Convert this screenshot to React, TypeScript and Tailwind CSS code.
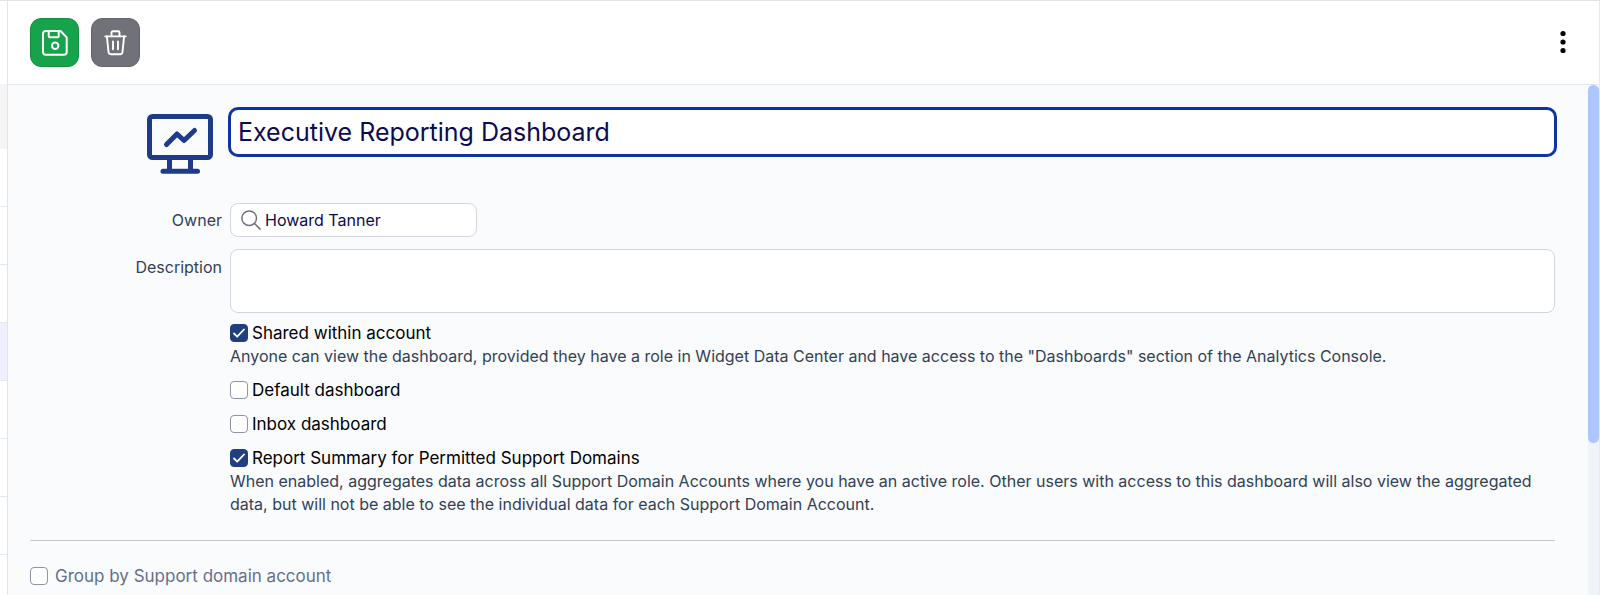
import { useState } from "react";
import type { ReactNode } from "react";

function SaveIcon() {
  return (
    <svg viewBox="0 0 26 26" className="size-[26px]" fill="none" stroke="currentColor" strokeWidth="2" strokeLinejoin="round" aria-hidden="true">
      <path d="M3.700 1h14.800l6.200 6.400v14.600a2.700 2.700 0 0 1-2.700 2.700H3.700A2.700 2.700 0 0 1 1 22V3.700A2.700 2.700 0 0 1 3.700 1Z" />
      <path d="M6.700 1v5.200a1 1 0 0 0 1 1h8a1 1 0 0 0 1-1V1" />
      <circle cx="13.200" cy="15.700" r="3.200" />
    </svg>
  );
}

function TrashIcon() {
  return (
    <svg viewBox="0 0 26 26" className="size-[26px]" fill="none" stroke="currentColor" strokeWidth="1.9" strokeLinecap="round" strokeLinejoin="round" aria-hidden="true">
      <path d="M2.300 6.400h20.400" />
      <path d="M3.900 6.400l1.600 15.600a2.400 2.400 0 0 0 2.400 2.200h9.200a2.400 2.400 0 0 0 2.400-2.200l1.600-15.600" />
      <path d="M8.500 6.200V2.500a1.300 1.300 0 0 1 1.300-1.300h5.400a1.300 1.300 0 0 1 1.300 1.300v3.700" />
      <path d="M10 11.500v7.700M15 11.500v7.700" />
    </svg>
  );
}

function MonitorIcon() {
  return (
    <svg viewBox="0 0 66 60" className="h-[60px] w-[66px] text-[#1e3a8a]" fill="none" stroke="currentColor" strokeWidth="5" strokeLinecap="round" strokeLinejoin="round" aria-hidden="true">
      <rect x="2.500" y="2.500" width="61" height="41" rx="3" />
      <path d="M22.500 44v13M43.500 44v13" strokeLinecap="butt" />
      <path d="M16 57.300h34.500" />
      <path d="M19.500 30.500l10.500-10.500 7 6.500 10.500-10" />
    </svg>
  );
}

function SearchIcon() {
  return (
    <svg viewBox="0 0 20 20" className="size-5 shrink-0 text-[#71717a]" fill="none" stroke="currentColor" strokeWidth="1.5" strokeLinecap="round" aria-hidden="true">
      <circle cx="8.200" cy="8.200" r="7.300" />
      <path d="M13.500 13.500l5.600 5.600" />
    </svg>
  );
}

type CheckProps = {
  id: string;
  label: string;
  initial?: boolean;
  muted?: boolean;
  children?: ReactNode;
};

function Check({ id, label, initial = false, muted = false, children }: CheckProps) {
  const [on, setOn] = useState(initial);
  return (
    <div>
      <div className={muted ? "flex items-center gap-[7px]" : "flex items-center gap-1"}>
        <span className="grid size-[18px] shrink-0">
          <input
            id={id}
            type="checkbox"
            checked={on}
            onChange={(e) => setOn(e.target.checked)}
            aria-describedby={children ? id + "-help" : undefined}
            className="col-start-1 row-start-1 size-[18px] appearance-none rounded-[4px] border border-[#8f94a8] bg-white checked:border-[#1f3f80] checked:bg-[#1f3f80]"
          />
          {on && (
            <svg viewBox="0 0 18 18" className="pointer-events-none col-start-1 row-start-1 size-[18px]" fill="none" stroke="#fff" strokeWidth="1.800" strokeLinecap="round" strokeLinejoin="round" aria-hidden="true">
              <path d="M4 9.500l3.200 3.200L14 5.500" />
            </svg>
          )}
        </span>
        <label htmlFor={id} className={muted ? "text-[17px] leading-6 text-[#64708b]" : "text-[17px] leading-6 text-black"}>
          {label}
        </label>
      </div>
      {children && (
        <p id={id + "-help"} className="leading-[23px] text-[#334155]">
          {children}
        </p>
      )}
    </div>
  );
}

export default function App() {
  const [name, setName] = useState("Executive Reporting Dashboard");
  const [owner, setOwner] = useState("Howard Tanner");
  return (
    <div className="flex min-h-screen border-t border-[#e2e4e8] bg-white font-['Inter',sans-serif] text-[16px]">
      <div className="flex w-2 shrink-0 flex-col border-r border-[#e2e4ea]">
        <div className="h-[83px]" />
        <div className="h-[65px] bg-[#f5f5f6]" />
        <div className="h-[58px] border-b border-[#e5e7eb]" />
        <div className="h-[58px] border-b border-[#e5e7eb]" />
        <div className="h-[58px] border-b border-[#e5e7eb]" />
        <div className="h-[58px] border-b border-[#e5e7eb] bg-[#eef0ff]" />
        <div className="h-[58px] border-b border-[#e5e7eb]" />
        <div className="h-[58px] border-b border-[#e5e7eb]" />
        <div className="h-[58px] border-b border-[#e5e7eb]" />
        <div className="flex-1" />
      </div>

      <div className="flex min-w-0 flex-1 flex-col border-r border-[#e5e9f0]">
        <header className="flex items-start gap-3 border-b border-[#e2e5ec] px-[22px] py-[17px]">
          <button type="button" aria-label="Save" className="grid size-[49px] place-items-center rounded-[11px] border border-[#15903f] bg-[#16a34a] text-white">
            <SaveIcon />
          </button>
          <button type="button" aria-label="Delete" className="grid size-[49px] place-items-center rounded-[11px] border border-[#65656e] bg-[#71717a] text-white">
            <TrashIcon />
          </button>
          <button type="button" aria-label="More actions" className="ml-auto grid h-12 w-7 place-items-center text-black">
            <svg viewBox="0 0 6 24" className="h-6 w-[6px]" fill="currentColor" aria-hidden="true">
              <circle cx="3" cy="3.500" r="2.600" />
              <circle cx="3" cy="12" r="2.600" />
              <circle cx="3" cy="20.500" r="2.600" />
            </svg>
          </button>
        </header>

        <div className="flex flex-1 bg-[#f9fbfd]">
          <main className="min-w-0 flex-1 pt-6 pr-[33px] pl-[22px]">
            <form onSubmit={(e) => e.preventDefault()}>
              <div className="grid grid-cols-[192px_minmax(0,1fr)] gap-x-2 border-b border-[#c6c8ce] pb-6">
                <div className="flex justify-end pt-[5px] pr-[9px]">
                  <MonitorIcon />
                </div>
                <input
                  aria-label="Dashboard name"
                  value={name}
                  onChange={(e) => setName(e.target.value)}
                  className="h-[46px] w-full rounded-lg bg-white px-2 text-[25px] text-[#0b0b4f] outline-[3px] -outline-offset-1 outline-[#0f35a5]"
                />

                <label htmlFor="owner" className="mt-[29px] text-right leading-[34px] text-[#334155]">
                  Owner
                </label>
                <div className="mt-[29px] flex h-[34px] w-[247px] items-center gap-1 rounded-lg border border-[#d4d6dd] bg-white px-[10px]">
                  <SearchIcon />
                  <input
                    id="owner"
                    value={owner}
                    onChange={(e) => setOwner(e.target.value)}
                    className="w-full min-w-0 bg-transparent text-[#0b0b4f] outline-none"
                  />
                </div>

                <label htmlFor="description" className="mt-3 pt-[6px] text-right leading-6 text-[#334155]">
                  Description
                </label>
                <textarea
                  id="description"
                  className="mt-3 block h-[64px] w-full resize-none rounded-lg border border-[#d4d6dd] bg-white px-2 py-1 outline-none"
                />

                <div className="col-start-2 mt-2 flex flex-col gap-[10px]">
                  <Check id="shared" label="Shared within account" initial>
                    Anyone can view the dashboard, provided they have a role in Widget Data Center and have access to the "Dashboards" section of the Analytics Console.
                  </Check>
                  <Check id="default" label="Default dashboard" />
                  <Check id="inbox" label="Inbox dashboard" />
                  <Check id="summary" label="Report Summary for Permitted Support Domains" initial>
                    When enabled, aggregates data across all Support Domain Accounts where you have an active role. Other users with access to this dashboard will also view the aggregated data, but will not be able to see the individual data for each Support Domain Account.
                  </Check>
                </div>
              </div>
              <div className="pt-[23px]">
                <Check id="group" label="Group by Support domain account" muted />
              </div>
            </form>
          </main>
          <div className="w-[11px] shrink-0 rounded-t-full bg-[#f0f4f8]" aria-hidden="true">
            <div className="h-[358px] rounded-full bg-[#adc6ff]" />
          </div>
        </div>
      </div>
    </div>
  );
}
